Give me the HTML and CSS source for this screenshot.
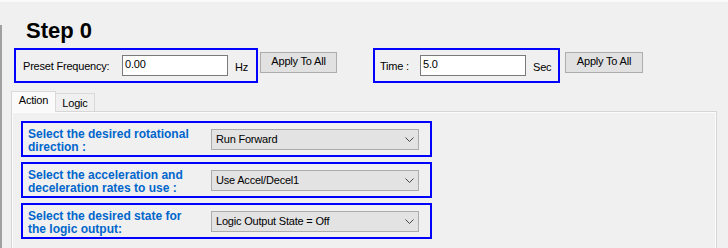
FILE: index.html
```html
<!DOCTYPE html>
<html>
<head>
<meta charset="utf-8">
<link rel="stylesheet" href="styles.css">
</head>
<body>
<div class="page">
  <h1 class="title">Step 0</h1>
  <div class="settings">
    <div class="group group-freq">
      <span class="glabel glabel-freq">Preset Frequency:</span>
      <span class="field">0.00</span>
      <span class="unit">Hz</span>
    </div>
    <button class="apply apply-freq">Apply To All</button>
    <div class="group group-time">
      <span class="glabel glabel-time">Time :</span>
      <span class="field">5.0</span>
      <span class="unit">Sec</span>
    </div>
    <button class="apply apply-time">Apply To All</button>
  </div>
  <div class="tabs">
    <div class="tab-strip">
      <span class="tab tab-active">Action</span>
      <span class="tab">Logic</span>
    </div>
    <div class="tab-panel">
      <div class="row">
        <div class="rlabel">Select the desired rotational<br>direction :</div>
        <div class="combo"><span>Run Forward</span><svg class="chev" width="9" height="5" viewBox="0 0 9 5"><polyline points="0.5,0.5 4.5,4.5 8.5,0.5" fill="none" stroke="#444" stroke-width="1"/></svg></div>
      </div>
      <div class="row">
        <div class="rlabel">Select the acceleration and<br>deceleration rates to use :</div>
        <div class="combo"><span>Use Accel/Decel1</span><svg class="chev" width="9" height="5" viewBox="0 0 9 5"><polyline points="0.5,0.5 4.5,4.5 8.5,0.5" fill="none" stroke="#444" stroke-width="1"/></svg></div>
      </div>
      <div class="row">
        <div class="rlabel">Select the desired state for<br>the logic output:</div>
        <div class="combo"><span>Logic Output State = Off</span><svg class="chev" width="9" height="5" viewBox="0 0 9 5"><polyline points="0.5,0.5 4.5,4.5 8.5,0.5" fill="none" stroke="#444" stroke-width="1"/></svg></div>
      </div>
    </div>
  </div>
</div>
</body>
</html>
```
FILE: styles.css
```css
* { box-sizing: border-box; }
html, body { margin: 0; padding: 0; }
body {
  width: 728px;
  height: 248px;
  overflow: hidden;
  border-top: 2px solid #fafafa;
  background: linear-gradient(#a0a0a0, #a0a0a0) 0 25px / 2px 100% no-repeat, #f0f0f0;
  font-family: "Liberation Sans", Arial, sans-serif;
  font-size: 11px;
  letter-spacing: -0.2px;
  color: #000;
  white-space: nowrap;
}
.page { display: flex; flex-direction: column; }
.title {
  margin: 16px 0 0 26px;
  font-size: 22px;
  line-height: 26px;
  font-weight: bold;
  letter-spacing: 0;
  color: #000;
}
.settings {
  display: flex;
  align-items: flex-start;
  margin-top: 4px;
  padding-left: 14px;
}
.group {
  display: flex;
  align-items: center;
  height: 35px;
  border: 2px solid #0000ff;
  padding-bottom: 1px;
}
.group-freq { width: 244px; padding-left: 7px; }
.group-time { width: 187px; padding-left: 5px; margin-left: 36px; }
.glabel { padding-top: 2px; }
.glabel-freq { width: 99px; }
.glabel-time { width: 40px; }
.field {
  width: 106px;
  height: 21px;
  background: #fff;
  border: 1px solid #7a7a7a;
  padding-left: 2px;
  line-height: 17px;
}
.unit { margin-left: 7px; padding-top: 3px; }
.apply {
  height: 21px;
  margin-top: 4px;
  padding: 0 0 2px;
  background: #e1e1e1;
  border: 1px solid #adadad;
  font: inherit;
  letter-spacing: inherit;
  color: #000;
  line-height: 17px;
}
.apply-freq { width: 77px; margin-left: 2px; }
.apply-time { width: 78px; margin-left: 5px; }
.tabs { margin-top: 8px; }
.tab-strip {
  display: flex;
  align-items: flex-end;
  padding-left: 11px;
  position: relative;
  z-index: 1;
}
.tab {
  height: 18px;
  border: 1px solid #d9d9d9;
  border-bottom: none;
  background: #f0f0f0;
  text-align: center;
}
.tab-active {
  width: 45px;
  height: 21px;
  margin-bottom: -1px;
  background: #fafafa;
  line-height: 17px;
}
.tab-active + .tab { width: 39px; border-left: none; line-height: 18px; }
.tab-panel {
  width: 706px;
  height: 137px;
  margin-left: 11px;
  border: 1px solid #d6d6d6;
  border-bottom: none;
  box-shadow: inset 1px 1px 0 #fcfcfc, inset -1px 0 0 #fcfcfc;
  padding: 9px 0 0 9px;
  display: flex;
  flex-direction: column;
  gap: 5px;
}
.row {
  width: 411px;
  height: 36px;
  flex: none;
  border: 2px solid #0000ff;
  display: flex;
  align-items: center;
  padding: 0 11px 0 5px;
}
.rlabel {
  flex: 1;
  font-weight: bold;
  font-size: 12px;
  line-height: 13px;
  letter-spacing: 0;
  color: #0066cc;
  padding-top: 3px;
}
.combo {
  width: 208px;
  height: 21px;
  background: #e3e3e3;
  border: 1px solid #acacac;
  display: flex;
  align-items: center;
  justify-content: space-between;
  padding: 0 4px 0 4px;
}
.chev { display: block; margin-top: 1px; }
```
